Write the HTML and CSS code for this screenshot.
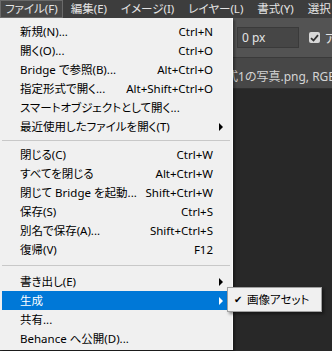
FILE: index.html
```html
<!DOCTYPE html>
<html lang="ja">
<head>
    <meta charset="UTF-8">
    <title>ファイル</title>
    <link rel="stylesheet" href="styles.css">
</head>
<body>
    <div class="app">
        <div class="menubar">
            <span class="top-item active">ファイル(F)</span>
            <span class="top-item">編集(E)</span>
            <span class="top-item">イメージ(I)</span>
            <span class="top-item">レイヤー(L)</span>
            <span class="top-item">書式(Y)</span>
            <span class="top-item">選択</span>
        </div>
        <div class="options">
            <div class="field">0 px</div>
            <div class="checkbox">
                <svg width="9" height="8" viewBox="0 0 9 8"><path d="M1 4.2 L3.5 6.5 L8 1.2" fill="none" stroke="#333" stroke-width="1.8"/></svg>
            </div>
            <span class="opt-label">アンチエイリアス</span>
        </div>
        <div class="tabs">
            <span class="tab">様式1の写真.png, RGB/8</span>
        </div>
        <div class="canvas"></div>

        <div class="menu">
            <div class="row"><span>新規(N)...</span><span class="key">Ctrl+N</span></div>
            <div class="row"><span>開く(O)...</span><span class="key">Ctrl+O</span></div>
            <div class="row"><span>Bridge で参照(B)...</span><span class="key">Alt+Ctrl+O</span></div>
            <div class="row"><span>指定形式で開く...</span><span class="key">Alt+Shift+Ctrl+O</span></div>
            <div class="row"><span>スマートオブジェクトとして開く...</span></div>
            <div class="row sub"><span>最近使用したファイルを開く(T)</span></div>
            <div class="sep"></div>
            <div class="row"><span>閉じる(C)</span><span class="key">Ctrl+W</span></div>
            <div class="row"><span>すべてを閉じる</span><span class="key">Alt+Ctrl+W</span></div>
            <div class="row"><span>閉じて Bridge を起動...</span><span class="key">Shift+Ctrl+W</span></div>
            <div class="row"><span>保存(S)</span><span class="key">Ctrl+S</span></div>
            <div class="row"><span>別名で保存(A)...</span><span class="key">Shift+Ctrl+S</span></div>
            <div class="row"><span>復帰(V)</span><span class="key">F12</span></div>
            <div class="sep wide"></div>
            <div class="row sub"><span>書き出し(E)</span></div>
            <div class="row sub selected"><span>生成</span></div>
            <div class="row"><span>共有...</span></div>
            <div class="row"><span>Behance へ公開(D)...</span></div>
        </div>

        <div class="submenu">
            <div class="row checked"><span>画像アセット</span></div>
        </div>
    </div>
</body>
</html>
```

FILE: styles.css
```css
body {
    margin: 0;
    padding: 0;
    background-color: #282828;
    font-family: "Noto Sans", "Noto Sans CJK JP", sans-serif;
    font-size: 12px;
    font-feature-settings: "palt";
    overflow: hidden;
}
.app {
    position: relative;
    width: 332px;
    height: 351px;
    overflow: hidden;
}
.menubar {
    display: flex;
    height: 18px;
    background-color: #3d3d3d;
    color: #e4e4e4;
    font-size: 11.5px;
    white-space: nowrap;
}
.top-item {
    flex-shrink: 0;
    padding: 0 7px;
    line-height: 17px;
}
.top-item.active {
    padding: 0 4px;
    margin-right: 1px;
    background-color: #474747;
    border: 1px solid #6a6a6a;
    line-height: 15px;
}
.options {
    display: flex;
    align-items: center;
    height: 39px;
    padding-left: 237px;
    background-color: #535353;
    border-bottom: 1px solid #3a3a3a;
    white-space: nowrap;
}
.options > * {
    flex-shrink: 0;
}
.field {
    width: 56px;
    height: 19px;
    padding-left: 4px;
    background-color: #464646;
    border: 1px solid #3a3a3a;
    color: #e4e4e4;
    line-height: 19px;
}
.checkbox {
    display: flex;
    align-items: center;
    justify-content: center;
    width: 11px;
    height: 11px;
    margin-left: 10px;
    background-color: #d8d8d8;
    border-radius: 2px;
}
.opt-label {
    margin-left: 5px;
    color: #e4e4e4;
}
.tabs {
    height: 30px;
    background-color: #474747;
    border-bottom: 1px solid #2f2f2f;
    white-space: nowrap;
}
.tab {
    display: inline-block;
    margin-left: 214px;
    line-height: 38px;
    color: #d4d4d4;
}
.canvas {
    height: 262px;
    background-color: #282828;
}
.menu {
    position: absolute;
    left: 0;
    top: 18px;
    width: 230px;
    padding: 4px 0 2px 2px;
    background-color: #f0f0f0;
    border-right: 1px solid #fafafa;
    box-shadow: 2px 2px 2px rgba(0, 0, 0, 0.35);
    color: #000;
    font-size: 11.5px;
}
.row {
    display: flex;
    justify-content: space-between;
    position: relative;
    height: 19px;
    line-height: 19px;
    padding: 0 19px 0 18px;
    white-space: nowrap;
}
.row.sub::after {
    content: "";
    position: absolute;
    right: 9px;
    top: 6px;
    border-left: 4px solid #000;
    border-top: 4px solid transparent;
    border-bottom: 4px solid transparent;
}
.row.selected {
    background-color: #0078d7;
    color: #fff;
}
.row.selected::after {
    border-left-color: #fff;
}
.sep {
    height: 1px;
    margin: 4px 2px 4px 0;
    background-color: #c8c8c8;
}
.sep.wide {
    margin: 6px 2px 6px 0;
}
.submenu {
    position: absolute;
    left: 227px;
    top: 287px;
    width: 93px;
    padding: 2px 0;
    background-color: #f0f0f0;
    border: 1px solid #a0a0a0;
    box-shadow: 2px 2px 3px rgba(0, 0, 0, 0.45);
    font-size: 11.5px;
}
.submenu .row {
    padding-left: 19px;
}
.row.checked::before {
    content: "✔";
    position: absolute;
    left: 6px;
    font-size: 10px;
}
```
